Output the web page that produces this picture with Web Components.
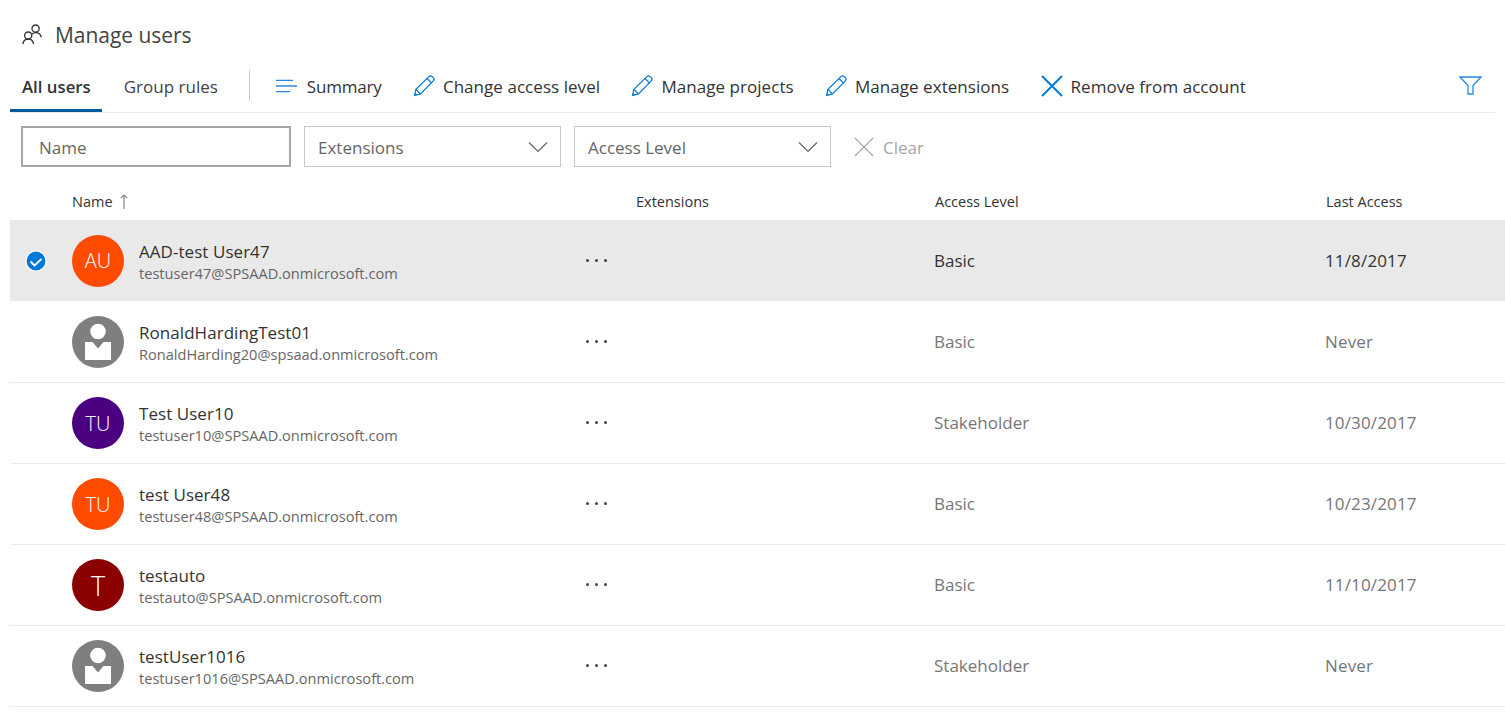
<!DOCTYPE html>
<html lang="en">
<head>
<meta charset="utf-8">
<title>Manage users</title>
<style>
html,body{margin:0;padding:0;background:#fff;overflow:hidden}
body{font-family:"Open Sans","Noto Sans",sans-serif;color:#333;width:1505px;height:714px}
</style>
</head>
<body>
<mu-page>
  <mu-title>Manage users</mu-title>
  <mu-toolbar></mu-toolbar>
  <mu-filters></mu-filters>
  <mu-table-head></mu-table-head>
  <mu-row selected initials="AU" color="#ff4b00" name="AAD-test User47" email="testuser47@SPSAAD.onmicrosoft.com" access="Basic" last="11/8/2017"></mu-row>
  <mu-row name="RonaldHardingTest01" email="RonaldHarding20@spsaad.onmicrosoft.com" access="Basic" last="Never"></mu-row>
  <mu-row initials="TU" color="#4b0082" name="Test User10" email="testuser10@SPSAAD.onmicrosoft.com" access="Stakeholder" last="10/30/2017"></mu-row>
  <mu-row initials="TU" color="#ff4b00" name="test User48" email="testuser48@SPSAAD.onmicrosoft.com" access="Basic" last="10/23/2017"></mu-row>
  <mu-row initials="T" big color="#8b0000" name="testauto" email="testauto@SPSAAD.onmicrosoft.com" access="Basic" last="11/10/2017"></mu-row>
  <mu-row name="testUser1016" email="testuser1016@SPSAAD.onmicrosoft.com" access="Stakeholder" last="Never"></mu-row>
</mu-page>
<script>
const BLUE='#0078d7';
const ICONS={
 pencil:`<svg width="24" height="24" viewBox="0 0 24 24" fill="none" stroke="${BLUE}" stroke-width="1.2"><path d="M2.6 21.4l1.3-6L16.9 2.600c1-.9 2.400-.9 3.300 0l1.100 1.100c.9 1 .9 2.300 0 3.200L8.500 20z"/><path d="M3.900 15.400l4.600 4.600M15 4.500l4.600 4.600M3 19.500l1.600 1.500"/></svg>`,
 summary:`<svg width="24" height="24" viewBox="0 0 24 24" fill="none" stroke="#2b88e8" stroke-width="1.3"><path d="M1 6.300h17M1 12h21M1 17.700h14"/></svg>`,
 close:`<svg width="24" height="24" viewBox="0 0 24 24" fill="none" stroke="${BLUE}" stroke-width="1.9"><path d="M2 2l20 20M22 2L2 22"/></svg>`
};
function def(name,css,html){
 customElements.define(name,class extends HTMLElement{
  constructor(){super();this.attachShadow({mode:'open'});}
  connectedCallback(){
   const a=n=>this.getAttribute(n)||'';
   this.shadowRoot.innerHTML=`<style>${css}</style>`+(typeof html==='function'?html(a,this):html);
  }
 });
}
def('mu-page',':host{display:block}','<slot></slot>');
def('mu-title',`
 :host{display:flex;align-items:center;height:69px;padding:0 0 0 22px;box-sizing:border-box;font-size:21px;letter-spacing:-.05px;color:#444;gap:12px}
 svg{display:block;margin-top:-2px}`,
 `<svg width="21" height="24" viewBox="0 0 21 24" fill="none" stroke="#333" stroke-width="1.3"><circle cx="13.6" cy="6.6" r="3.6"/><path d="M9.600 12.200c1.200-1 2.600-1.600 4-1.600 2.800 0 5 1.800 5.800 4.600"/><circle cx="6.200" cy="13.600" r="3.600"/><path d="M.8 22c.6-3 2.800-5 5.400-5s4.800 2 5.400 5"/></svg><span><slot></slot></span>`);
def('mu-tab',`
 :host{display:flex;align-items:center;height:43px;padding:0 12px 6px;box-sizing:border-box;font-size:17px;color:#444;white-space:nowrap;border-bottom:3px solid transparent}
 :host([active]){font-weight:600;font-size:16.800px;border-bottom-color:#005a9e;color:#333;padding-right:11px}`,'<slot></slot>');
def('mu-tool',`
 :host{display:flex;align-items:center;gap:7px;font-size:17px;letter-spacing:.05px;color:#333;white-space:nowrap}
 .i{width:24px;height:24px;display:block;line-height:0}`,
 (a)=>`<span class="i">${ICONS[a('icon')]}</span><span><slot></slot></span>`);
def('mu-toolbar',`
 :host{display:flex;align-items:flex-end;height:43px;margin-left:10px;width:1485px;border-bottom:1px solid #eaeaea}
 .div{width:1px;height:31px;background:#c8c8c8;margin:0 25px 0 19px;align-self:flex-start;margin-top:1px}
 .tools{display:flex;gap:30.300px;align-items:center;align-self:center;padding-bottom:9px}
 .f{margin-left:auto;margin-right:13px;line-height:0;align-self:center;padding-bottom:11px}`,
 `<mu-tab active>All users</mu-tab><mu-tab style="margin-left:10px">Group rules</mu-tab><span class="div"></span>
  <div class="tools"><mu-tool icon="summary" style="letter-spacing:-.2px;gap:8px">Summary</mu-tool><mu-tool icon="pencil">Change access level</mu-tool><mu-tool icon="pencil">Manage projects</mu-tool><mu-tool icon="pencil">Manage extensions</mu-tool><mu-tool icon="close">Remove from account</mu-tool></div>
  <span class="f"><svg width="23" height="19" viewBox="0 0 23 19" fill="none" stroke="#2b88e8" stroke-width="1.300"><path d="M1 1h21l-8 8.500v8.500H9V9.500z"/></svg></span>`);
def('mu-select',`
 :host{display:flex;align-items:center;justify-content:space-between;box-sizing:border-box;height:41px;border:1px solid #c8c8c8;padding:0 12px 0 13px;font-size:17px;color:#666;background:#fff}
 span{padding-top:2px}
 svg{display:block}`,
 `<span><slot></slot></span><svg width="20" height="12" viewBox="0 0 20 12" fill="none" stroke="#666" stroke-width="1.200"><path d="M1 1.500l9 9 9-9"/></svg>`);
def('mu-filters',`
 :host{display:flex;align-items:center;gap:13px;padding:13px 0 0 21px;height:41px}
 .name{box-sizing:border-box;width:270px;height:41px;border:2px solid #a6a6a6;display:flex;align-items:center;padding:2px 0 0 16px;font-size:17px;color:#666}
 .clear{display:flex;align-items:center;gap:9px;color:#a6a6a6;font-size:17px;margin-left:10px}
 .clear span{padding-top:2px}
 svg{display:block}`,
 `<div class="name">Name</div><mu-select style="width:257px">Extensions</mu-select><mu-select style="width:257px">Access Level</mu-select>
  <div class="clear"><svg width="20" height="20" viewBox="0 0 20 20" fill="none" stroke="#a6a6a6" stroke-width="1.200"><path d="M1 1l18 18M19 1L1 19"/></svg><span>Clear</span></div>`);
def('mu-table-head',`
 :host{display:grid;grid-template-columns:62px 564px 299px 391px 1fr;margin-left:10px;height:53px;align-items:center;font-size:14.500px;color:#333;box-sizing:border-box}
 div{padding-top:16px}
 .n{display:flex;align-items:center;gap:7px}`,
 `<span></span><div class="n">Name <svg width="8" height="15" viewBox="0 0 8 15" fill="none" stroke="#888" stroke-width="1.200"><path d="M4 15V1M.8 4.200L4 1l3.200 3.200"/></svg></div><div>Extensions</div><div>Access Level</div><div>Last Access</div>`);
def('mu-row',`
 :host{display:grid;grid-template-columns:62px 513px 51px 299px 391px 1fr;margin-left:10px;height:80px;align-items:center;border-bottom:1px solid #eaeaea;font-size:17px;color:#767676}
 :host([selected]){background:#e9e9e9;height:81px;border-bottom-color:#fff;color:#333;background-clip:padding-box}
 :host([selected]) .txt{padding-top:4px}
 :host([selected]) .dots{padding-bottom:0}
 .chk{display:flex;justify-content:center;width:52px}
 .u{display:flex;align-items:center;gap:15px}
 .av{width:52px;height:52px;border-radius:50%;display:flex;align-items:center;justify-content:center;color:#fff;font-size:20px;font-weight:300;flex:none;overflow:hidden}
 .av.big{font-size:27px}
 .txt{padding-top:2px}
 .nm{font-size:17px;color:#333;line-height:22px;letter-spacing:.05px}
 .em{font-size:14.600px;color:#666;line-height:21px}
 .dots{display:flex;gap:6px;padding-bottom:2px;margin-left:1px}
 .dots i{width:3px;height:3px;border-radius:50%;background:#444;display:block}
 .cell{padding-bottom:1px;margin-left:-1px}
 .last{letter-spacing:.15px}
 svg{display:block}`,
 (a,el)=>{
  const sel=el.hasAttribute('selected');
  const ini=a('initials');
  const av=ini?`<div class="av${el.hasAttribute('big')?' big':''}" style="background:${a('color')}">${ini}</div>`
   :`<div class="av" style="background:#7f7f7f"><svg width="52" height="52" viewBox="0 0 52 52"><circle cx="26" cy="15.500" r="7.800" fill="#fff"/><path d="M13 26h7.500l5.500 6.500 5.500-6.500H39v18H13z" fill="#fff"/></svg></div>`;
  return `<div class="chk">${sel?`<svg width="22" height="22" viewBox="0 0 22 22"><circle cx="11" cy="11" r="10" fill="#0078d7" stroke="#fff" stroke-width="1.200"/><path d="M5.500 11.500l4 4 7-6.500" fill="none" stroke="#fff" stroke-width="1.800"/></svg>`:''}</div>
   <div class="u">${av}<div class="txt"><div class="nm">${a('name')}</div><div class="em">${a('email')}</div></div></div>
   <div class="dots"><i></i><i></i><i></i></div><div></div><div class="cell">${a('access')}</div><div class="cell last">${a('last')}</div>`;
 });
</script>
</body>
</html>
